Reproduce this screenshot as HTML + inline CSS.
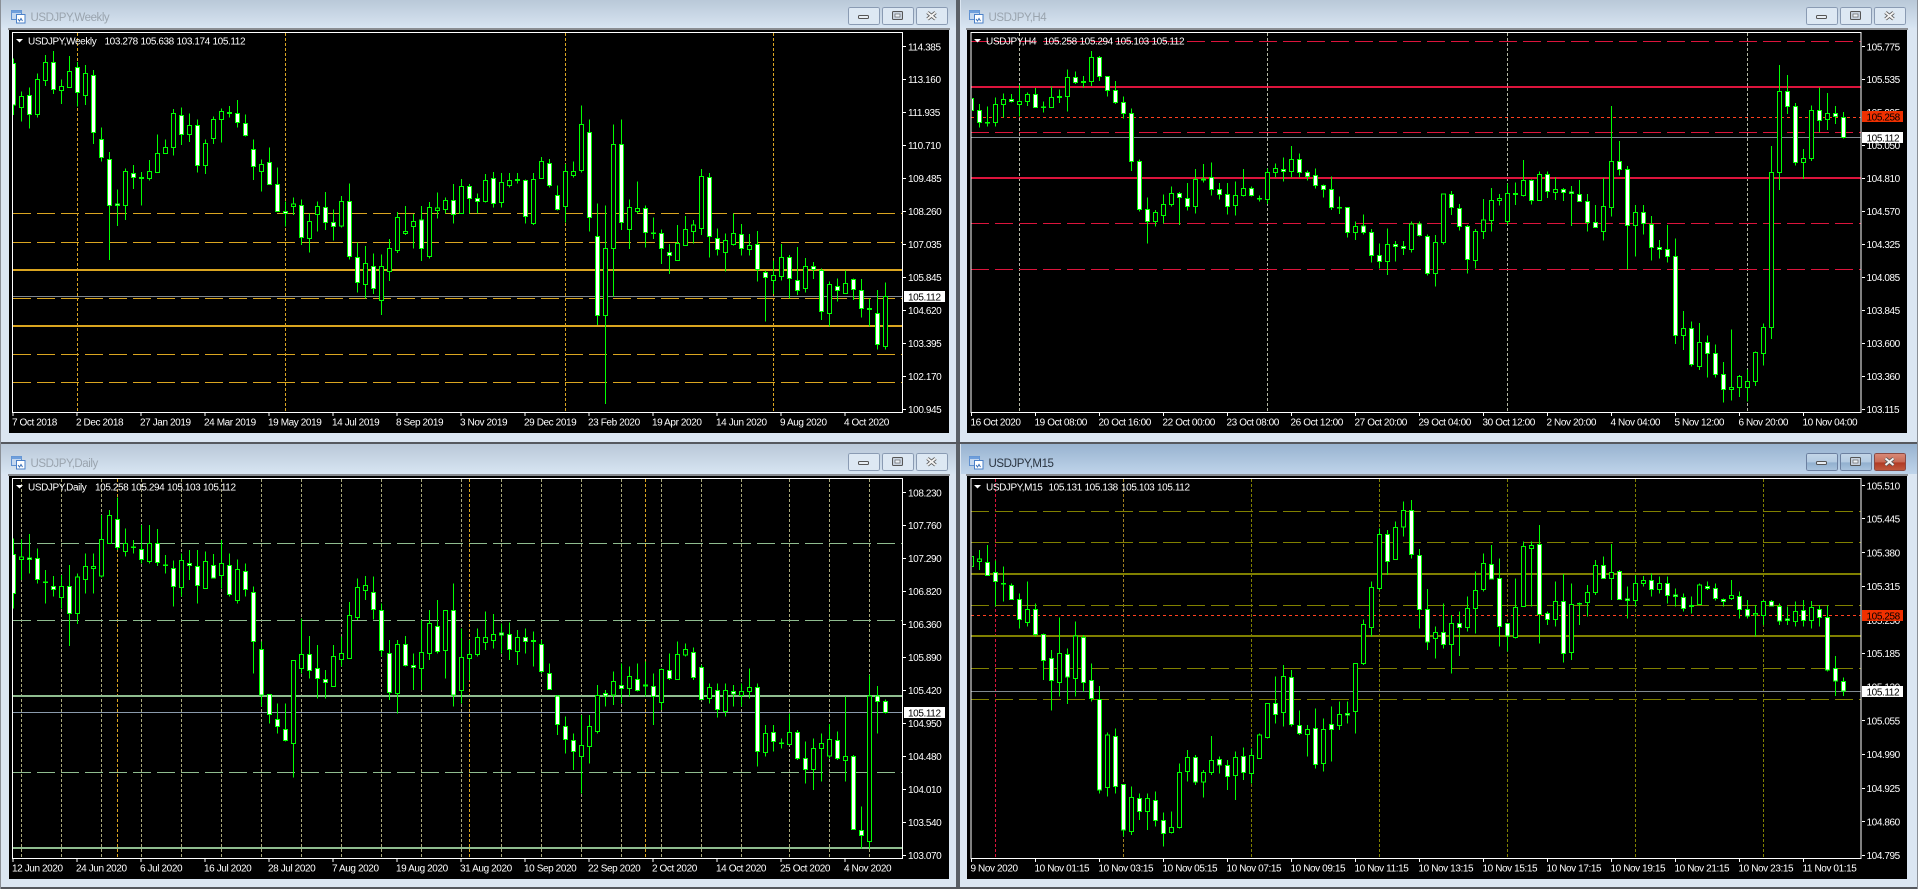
<!DOCTYPE html>
<html><head><meta charset="utf-8"><title>USDJPY charts</title>
<style>
html,body{margin:0;padding:0;background:#dbe6f2;width:1918px;height:889px;overflow:hidden}
svg{display:block}
text{font-family:"Liberation Sans",sans-serif;font-size:10px;letter-spacing:-.4px;fill:#fff}
text.k{fill:#000}
text.t{font-size:11.5px;letter-spacing:-.45px;fill:#9aa4ae}
text.a{font-size:11.5px;letter-spacing:-.45px;fill:#2a3440}
.c path{vector-effect:non-scaling-stroke;stroke:#00ff00;stroke-width:1}
.w{fill:none}.h{fill:#000}.d{fill:#fff}
.g{fill:none;stroke-width:1}
</style></head><body>
<svg width="1918" height="889" viewBox="0 0 1918 889" xmlns="http://www.w3.org/2000/svg" shape-rendering="crispEdges">
<defs>
<linearGradient id="ti" x1="0" y1="0" x2="0" y2="1"><stop offset="0" stop-color="#b9c8d8"/><stop offset="1" stop-color="#d8e5f2"/></linearGradient>
<linearGradient id="ta" x1="0" y1="0" x2="0" y2="1"><stop offset="0" stop-color="#98b3d0"/><stop offset="1" stop-color="#bfd4ea"/></linearGradient>
<linearGradient id="br" x1="0" y1="0" x2="0" y2="1"><stop offset="0" stop-color="#d98a78"/><stop offset=".5" stop-color="#c76a56"/><stop offset=".55" stop-color="#b03a24"/><stop offset="1" stop-color="#c05a40"/></linearGradient>
<linearGradient id="bb" x1="0" y1="0" x2="0" y2="1"><stop offset="0" stop-color="#c4d6e8"/><stop offset=".5" stop-color="#b4cbe2"/><stop offset=".55" stop-color="#92b0cf"/><stop offset="1" stop-color="#aac4de"/></linearGradient>
<clipPath id="c1"><rect x="13" y="33" width="889" height="379"/></clipPath>
<clipPath id="c2"><rect x="972" y="33" width="889" height="379"/></clipPath>
<clipPath id="c3"><rect x="13" y="479" width="889" height="379"/></clipPath>
<clipPath id="c4"><rect x="972" y="479" width="889" height="379"/></clipPath>
<g id="ic" shape-rendering="auto">
<rect x="11.5" y="10.5" width="10" height="9" fill="#c4d8f0" stroke="#5f90d0"/>
<rect x="11.5" y="10.5" width="10" height="2.5" fill="#6f9fdc"/>
<rect x="16.5" y="14.5" width="8.5" height="8.5" fill="#fff" stroke="#4a80c8"/>
<path d="M18 19l1.5 2 1.5-2.5 1.500 2.500" fill="none" stroke="#3a70b8"/>
</g>
<g id="gl" shape-rendering="auto">
<rect x="858.500" y="15.500" width="10" height="3" rx="1" fill="#e8eef4" stroke="#555"/>
<rect x="892.500" y="11.500" width="10" height="8" rx="1" fill="#c8d2de" stroke="#555"/>
<rect x="895" y="14" width="5" height="3" fill="#eef3f8" stroke="#555" stroke-width=".6"/>
<path d="M927.500 12.500l8 6.500m0-6.500l-8 6.500" stroke="#555" stroke-width="3.600" fill="none"/>
<path d="M927.500 12.500l8 6.500m0-6.500l-8 6.500" stroke="#f2f2f2" stroke-width="2" fill="none"/>
</g>
<g id="bi">
<rect x="848.500" y="7.500" width="31" height="17" rx="2" fill="#dde8f3" stroke="#8a9bb3"/>
<rect x="882.500" y="7.500" width="31" height="17" rx="2" fill="#dde8f3" stroke="#8a9bb3"/>
<rect x="916.500" y="7.500" width="31" height="17" rx="2" fill="#dde8f3" stroke="#8a9bb3"/>
<use href="#gl"/>
</g>
<g id="fw">
<path d="M13 413v3m64-3v3m64-3v3m64-3v3m64-3v3m64-3v3m64-3v3m64-3v3m64-3v3m64-3v3m64-3v3m64-3v3m64-3v3m64-3v3" stroke="#fff" fill="none"/>
<path d="M12.500 32.500H902.500V412.500H12.500Z" stroke="#fff" fill="none"/>
</g>
</defs>

<!-- window frames -->
<rect x="0" y="0" width="1918" height="889" fill="#dbe6f2"/>
<rect x="0" y="0" width="957" height="28" fill="url(#ti)"/>
<rect x="961" y="0" width="957" height="28" fill="url(#ti)"/>
<rect x="0" y="444" width="957" height="30" fill="url(#ti)"/>
<rect x="961" y="444" width="957" height="30" fill="url(#ta)"/>
<rect x="956" y="0" width="4" height="889" fill="#5a5f66"/>
<rect x="0" y="442" width="1918" height="2" fill="#55585e"/>
<rect x="0" y="887" width="1918" height="2" fill="#55585e"/>
<rect x="0" y="0" width="1" height="889" fill="#8a8f96"/>
<rect x="1917" y="0" width="1" height="889" fill="#8a8f96"/>
<rect x="8" y="28" width="942" height="2" fill="#8b8e93"/>
<rect x="966" y="28" width="942" height="2" fill="#8b8e93"/>
<rect x="8" y="474" width="942" height="2" fill="#8b8e93"/>
<rect x="966" y="474" width="942" height="2" fill="#8b8e93"/>
<rect x="9" y="30" width="940" height="403" fill="#000"/>
<rect x="967" y="30" width="940" height="403" fill="#000"/>
<rect x="9" y="476" width="940" height="403" fill="#000"/>
<rect x="967" y="476" width="940" height="403" fill="#000"/>

<!-- title bars -->
<use href="#ic"/>
<use href="#ic" x="958"/>
<use href="#ic" y="446"/>
<use href="#ic" x="958" y="446"/>
<text class="t" x="30.500" y="21">USDJPY,Weekly</text>
<text class="t" x="988.500" y="21">USDJPY,H4</text>
<text class="t" x="30.500" y="467">USDJPY,Daily</text>
<text class="a" x="988.500" y="467">USDJPY,M15</text>
<use href="#bi"/>
<use href="#bi" x="958"/>
<use href="#bi" y="446"/>
<rect x="1806.500" y="453.500" width="31" height="17" rx="2" fill="url(#bb)" stroke="#6c80a0"/>
<rect x="1840.500" y="453.500" width="31" height="17" rx="2" fill="url(#bb)" stroke="#6c80a0"/>
<rect x="1874.500" y="453.500" width="31" height="17" rx="2" fill="url(#br)" stroke="#8a4a44"/>
<use href="#gl" x="958" y="446"/>

<!-- WEEKLY -->
<g class="g">
<path d="M77.500 33V412M285.500 33V412M565.500 33V412M773.500 33V412" stroke="#daa520" stroke-dasharray="3 2"/>
<path d="M13 213.500H902M13 242.500H902M13 298.500H902M13 354.500H902M13 382.500H902" stroke="#daa520" stroke-dasharray="18 6"/>
<path d="M13 270H902M13 326H902" stroke="#daa520" stroke-width="2"/>
<path d="M13 296.500H902" stroke="#808890"/>
</g>
<g clip-path="url(#c1)"><g class="c" transform="scale(1 .33333)">
<path class="w" d="M13.500 175V345M21.500 275V365M29.500 262V385M37.500 220V352M45.500 165V258M53.500 153V282M61.500 238V312M69.500 168V262M77.500 186V320M85.500 195V315M93.500 210V432M101.500 382V485M109.500 456V780M117.500 568V678M125.500 505V660M133.500 495V567M141.500 516V617M149.500 480V542M157.500 403V518M165.500 418V460M173.500 327V467M181.500 322V435M189.500 340V426M197.500 358V518M205.500 418V522M213.500 350V432M221.500 325V428M229.500 318V353M237.500 300V383M245.500 343V410M253.500 418V540M261.500 478V575M269.500 442V553M277.500 502V635M285.500 604V680M293.500 592V645M301.500 598V735M309.500 640V758M317.500 604V695M325.500 576V690M333.500 628V722M341.500 588V683M349.500 550V778M357.500 728V878M365.500 738V895M373.500 760V882M381.500 763V945M389.500 717V843M397.500 636V759M405.500 618V705M413.500 642V745M421.500 618V783M429.500 606V775M437.500 578V655M445.500 592V640M453.500 552V670M461.500 537V641M469.500 552V641M477.500 580V640M485.500 522V608M493.500 516V623M501.500 519V623M509.500 519V563M517.500 519V551M525.500 538V670M533.500 519V675M541.500 471V535M549.500 477V563M557.500 556V632M565.500 492V667M573.500 484V532M581.500 316V518M589.500 358V695M597.500 610V975M605.500 616V1212M613.500 373V890M621.500 358V690M629.500 598V747M637.500 544V640M645.500 616V743M653.500 652V717M661.500 688V792M669.500 732V822M677.500 675V730M685.500 648V737M693.500 660V731M701.500 507V705M709.500 519V773M717.500 685V767M725.500 700V815M733.500 640V737M741.500 672V767M749.500 702V767M757.500 693V845M765.500 812V965M773.500 781V882M781.500 732V842M789.500 765V895M797.500 741V885M805.500 774V878M813.500 786V837M821.500 805V960M829.500 844V980M837.500 835V905M845.500 812V880M853.500 835V900M861.500 837V953M869.500 895V980M877.500 870V1049M885.500 847V1049"/>
<path class="h" d="M19.500 290h4V322h-4zM35.500 238h4V344h-4zM43.500 187h4V241h-4zM59.500 259h4V271h-4zM67.500 214h4V262h-4zM83.500 220h4V286h-4zM123.500 514h4V616h-4zM147.500 514h4V536h-4zM155.500 460h4V518h-4zM163.500 442h4V460h-4zM171.500 340h4V442h-4zM187.500 376h4V403h-4zM203.500 430h4V496h-4zM211.500 358h4V416h-4zM219.500 334h4V358h-4zM259.500 493h4V515h-4zM291.500 612h4V620h-4zM307.500 664h4V715h-4zM315.500 620h4V644h-4zM339.500 604h4V678h-4zM363.500 790h4V853h-4zM379.500 799h4V901h-4zM387.500 745h4V815h-4zM395.500 652h4V752h-4zM403.500 694h4V701h-4zM411.500 664h4V679h-4zM427.500 622h4V770h-4zM435.500 624h4V632h-4zM443.500 601h4V628h-4zM459.500 559h4V641h-4zM483.500 541h4V605h-4zM499.500 547h4V607h-4zM507.500 541h4V556h-4zM531.500 538h4V670h-4zM539.500 484h4V535h-4zM563.500 514h4V620h-4zM571.500 514h4V526h-4zM579.500 373h4V512h-4zM603.500 745h4V946h-4zM611.500 433h4V745h-4zM627.500 622h4V688h-4zM635.500 625h4V635h-4zM675.500 730h4V781h-4zM683.500 688h4V737h-4zM691.500 675h4V694h-4zM699.500 529h4V685h-4zM723.500 721h4V757h-4zM731.500 700h4V733h-4zM747.500 736h4V748h-4zM771.500 826h4V841h-4zM779.500 772h4V829h-4zM803.500 799h4V865h-4zM827.500 853h4V940h-4zM843.500 850h4V880h-4zM883.500 889h4V1039h-4z"/>
<path class="d" d="M11.500 190h4V315h-4zM27.500 287h4V343h-4zM51.500 187h4V268h-4zM75.500 202h4V277h-4zM91.500 226h4V397h-4zM99.500 418h4V472h-4zM107.500 478h4V616h-4zM115.500 612h4V616h-4zM131.500 520h4V532h-4zM139.500 532h4V535h-4zM179.500 346h4V403h-4zM195.500 376h4V496h-4zM227.500 338h4V340h-4zM235.500 340h4V367h-4zM243.500 370h4V406h-4zM251.500 448h4V499h-4zM267.500 487h4V553h-4zM275.500 553h4V635h-4zM283.500 634h4V640h-4zM299.500 616h4V713h-4zM323.500 622h4V668h-4zM331.500 667h4V679h-4zM347.500 604h4V770h-4zM355.500 772h4V848h-4zM371.500 799h4V865h-4zM419.500 660h4V746h-4zM451.500 601h4V643h-4zM467.500 559h4V595h-4zM475.500 596h4V604h-4zM491.500 535h4V610h-4zM515.500 538h4V541h-4zM523.500 541h4V649h-4zM547.500 490h4V556h-4zM555.500 586h4V628h-4zM587.500 397h4V652h-4zM595.500 709h4V946h-4zM619.500 433h4V667h-4zM643.500 625h4V697h-4zM651.500 699h4V701h-4zM659.500 700h4V745h-4zM667.500 757h4V766h-4zM707.500 532h4V710h-4zM715.500 715h4V748h-4zM739.500 703h4V745h-4zM755.500 733h4V808h-4zM763.500 818h4V832h-4zM787.500 772h4V835h-4zM795.500 841h4V871h-4zM811.500 799h4V808h-4zM819.500 812h4V934h-4zM835.500 859h4V871h-4zM851.500 838h4V868h-4zM859.500 871h4V925h-4zM867.500 925h4V928h-4zM875.500 940h4V1033h-4z"/>
</g></g>
<use href="#fw"/>
<path d="M903 46.500h3m-3 33h3m-3 33h3m-3 33h3m-3 33h3m-3 33h3m-3 33h3m-3 33h3m-3 33h3m-3 33h3m-3 33h3m-3 33h3" stroke="#fff" fill="none"/>
<path d="M16 39h7l-3.500 3.500z" fill="#fff" shape-rendering="auto"/>
<text x="28" y="44.500">USDJPY,Weekly</text><text x="104.500" y="44.500">103.278</text><text x="140.500" y="44.500">105.638</text><text x="176.500" y="44.500">103.174</text><text x="212.500" y="44.500">105.112</text>
<text x="908" y="50.500">114.385</text><text x="908" y="83">113.160</text><text x="908" y="116">111.935</text><text x="908" y="149">110.710</text><text x="908" y="182">109.485</text><text x="908" y="215">108.260</text><text x="908" y="248">107.035</text><text x="908" y="281">105.845</text><text x="908" y="314">104.620</text><text x="908" y="347">103.395</text><text x="908" y="380">102.170</text><text x="908" y="413">100.945</text>
<rect x="904" y="291" width="41" height="11" fill="#fff"/><text class="k" x="908" y="300.500">105.112</text>
<text x="12" y="425.500">7 Oct 2018</text><text x="76" y="425.500">2 Dec 2018</text><text x="140" y="425.500">27 Jan 2019</text><text x="204" y="425.500">24 Mar 2019</text><text x="268" y="425.500">19 May 2019</text><text x="332" y="425.500">14 Jul 2019</text><text x="396" y="425.500">8 Sep 2019</text><text x="460" y="425.500">3 Nov 2019</text><text x="524" y="425.500">29 Dec 2019</text><text x="588" y="425.500">23 Feb 2020</text><text x="652" y="425.500">19 Apr 2020</text><text x="716" y="425.500">14 Jun 2020</text><text x="780" y="425.500">9 Aug 2020</text><text x="844" y="425.500">4 Oct 2020</text>

<!-- H4 -->
<g class="g">
<path d="M1019.500 33V412M1267.500 33V412M1507.500 33V412M1747.500 33V412" stroke="#b4b8a4" stroke-dasharray="3 2"/>
<path d="M971 41.500H1861M971 132.500H1861M971 223.500H1861M971 269.500H1861" stroke="#dc143c" stroke-dasharray="18 6"/>
<path d="M971 87H1861M971 178H1861" stroke="#dc143c" stroke-width="2"/>
<path d="M971 117.500H1861" stroke="#ff4020" stroke-dasharray="3 3"/>
<path d="M971 137.500H1861" stroke="#808890"/>
</g>
<g clip-path="url(#c2)"><g class="c" transform="scale(1 .33333)">
<path class="w" d="M971.500 270V365M979.500 312V383M987.500 320V380M995.500 292V380M1003.500 280V352M1011.500 282V308M1019.500 255V350M1027.500 277V318M1035.500 264V323M1043.500 305V338M1051.500 259V323M1059.500 268V309M1067.500 208V335M1075.500 214V252M1083.500 228V263M1091.500 153V258M1099.500 168V243M1107.500 229V290M1115.500 243V312M1123.500 289V356M1131.500 325V513M1139.500 478V634M1147.500 592V731M1155.500 630V680M1163.500 583V670M1171.500 560V620M1179.500 576V675M1187.500 549V632M1195.500 507V641M1203.500 492V548M1211.500 487V587M1219.500 549V599M1227.500 549V644M1235.500 544V647M1243.500 507V590M1251.500 559V590M1259.500 586V604M1267.500 505V612M1275.500 490V533M1283.500 472V545M1291.500 438V533M1299.500 460V533M1307.500 511V542M1315.500 505V566M1323.500 553V593M1331.500 529V630M1339.500 589V642M1347.500 622V713M1355.500 664V720M1363.500 643V703M1371.500 687V788M1379.500 730V805M1387.500 685V825M1395.500 723V785M1403.500 723V765M1411.500 664V757M1419.500 664V710M1427.500 703V827M1435.500 705V860M1443.500 580V733M1451.500 573V645M1459.500 612V691M1467.500 675V821M1475.500 687V805M1483.500 597V717M1491.500 564V695M1499.500 582V617M1507.500 550V675M1515.500 548V615M1523.500 480V590M1531.500 539V614M1539.500 515V602M1547.500 514V594M1555.500 532V600M1563.500 564V603M1571.500 558V678M1579.500 540V606M1587.500 582V695M1595.500 615V684M1603.500 534V722M1611.500 318V650M1619.500 423V527M1627.500 498V808M1635.500 615V770M1643.500 615V703M1651.500 648V782M1659.500 720V776M1667.500 675V788M1675.500 715V1032M1683.500 933V1050M1691.500 964V1100M1699.500 969V1110M1707.500 1006V1133M1715.500 1033V1133M1723.500 1086V1208M1731.500 988V1202M1739.500 1125V1191M1747.500 1108V1205M1755.500 1054V1158M1763.500 970V1097M1771.500 438V1017M1779.500 195V570M1787.500 225V342M1795.500 309V497M1803.500 447V537M1811.500 316V483M1819.500 262V398M1827.500 279V390M1835.500 318V372M1843.500 336V416"/>
<path class="h" d="M993.500 313h4V368h-4zM1001.500 298h4V314h-4zM1017.500 304h4V314h-4zM1025.500 283h4V304h-4zM1049.500 292h4V323h-4zM1065.500 232h4V290h-4zM1089.500 172h4V245h-4zM1153.500 637h4V665h-4zM1161.500 613h4V646h-4zM1169.500 580h4V613h-4zM1193.500 538h4V620h-4zM1233.500 586h4V617h-4zM1241.500 565h4V587h-4zM1265.500 517h4V598h-4zM1273.500 505h4V518h-4zM1289.500 478h4V515h-4zM1353.500 679h4V697h-4zM1385.500 733h4V784h-4zM1409.500 672h4V748h-4zM1433.500 727h4V820h-4zM1441.500 582h4V727h-4zM1473.500 694h4V781h-4zM1481.500 660h4V694h-4zM1489.500 601h4V662h-4zM1497.500 595h4V601h-4zM1505.500 580h4V665h-4zM1521.500 541h4V587h-4zM1537.500 523h4V602h-4zM1553.500 568h4V578h-4zM1601.500 619h4V694h-4zM1609.500 484h4V622h-4zM1633.500 637h4V676h-4zM1681.500 985h4V1006h-4zM1697.500 1027h4V1100h-4zM1729.500 1162h4V1168h-4zM1737.500 1129h4V1162h-4zM1745.500 1145h4V1162h-4zM1753.500 1057h4V1145h-4zM1761.500 982h4V1060h-4zM1769.500 517h4V982h-4zM1777.500 274h4V518h-4zM1801.500 475h4V488h-4zM1809.500 331h4V476h-4zM1825.500 340h4V358h-4z"/>
<path class="d" d="M969.500 295h4V332h-4zM977.500 331h4V368h-4zM985.500 367h4V369h-4zM1009.500 298h4V305h-4zM1033.500 283h4V322h-4zM1041.500 321h4V323h-4zM1057.500 289h4V292h-4zM1073.500 232h4V248h-4zM1081.500 244h4V247h-4zM1097.500 172h4V229h-4zM1105.500 229h4V271h-4zM1113.500 271h4V308h-4zM1121.500 307h4V340h-4zM1129.500 340h4V484h-4zM1137.500 484h4V628h-4zM1145.500 628h4V664h-4zM1177.500 580h4V592h-4zM1185.500 596h4V620h-4zM1201.500 537h4V540h-4zM1209.500 532h4V568h-4zM1217.500 568h4V583h-4zM1225.500 583h4V619h-4zM1249.500 565h4V587h-4zM1257.500 595h4V597h-4zM1281.500 508h4V515h-4zM1297.500 478h4V518h-4zM1305.500 517h4V529h-4zM1313.500 526h4V556h-4zM1321.500 556h4V568h-4zM1329.500 568h4V622h-4zM1337.500 622h4V624h-4zM1345.500 622h4V697h-4zM1361.500 678h4V697h-4zM1369.500 697h4V766h-4zM1377.500 766h4V784h-4zM1393.500 733h4V739h-4zM1401.500 739h4V745h-4zM1417.500 672h4V706h-4zM1425.500 709h4V820h-4zM1449.500 583h4V622h-4zM1457.500 625h4V679h-4zM1465.500 679h4V778h-4zM1513.500 580h4V583h-4zM1529.500 541h4V602h-4zM1545.500 523h4V575h-4zM1561.500 568h4V578h-4zM1569.500 576h4V581h-4zM1577.500 583h4V605h-4zM1585.500 604h4V667h-4zM1593.500 667h4V683h-4zM1617.500 484h4V508h-4zM1625.500 508h4V676h-4zM1641.500 637h4V671h-4zM1649.500 673h4V742h-4zM1657.500 742h4V748h-4zM1665.500 748h4V769h-4zM1673.500 769h4V1006h-4zM1689.500 985h4V1093h-4zM1705.500 1027h4V1060h-4zM1713.500 1060h4V1123h-4zM1721.500 1123h4V1168h-4zM1785.500 274h4V319h-4zM1793.500 319h4V488h-4zM1817.500 331h4V362h-4zM1833.500 340h4V350h-4zM1841.500 352h4V412h-4z"/>
</g></g>
<use href="#fw" x="958.500"/>
<path d="M1862 46.500h3m-3 33h3m-3 33h3m-3 33h3m-3 33h3m-3 33h3m-3 33h3m-3 33h3m-3 33h3m-3 33h3m-3 33h3m-3 33h3" stroke="#fff" fill="none"/>
<path d="M974 39h7l-3.500 3.500z" fill="#fff" shape-rendering="auto"/>
<text x="986" y="44.500">USDJPY,H4</text><text x="1043.500" y="44.500">105.258</text><text x="1079.500" y="44.500">105.294</text><text x="1115.500" y="44.500">105.103</text><text x="1151.500" y="44.500">105.112</text>
<text x="1866.500" y="50.500">105.775</text><text x="1866.500" y="83">105.535</text><text x="1866.500" y="116">105.295</text><text x="1866.500" y="149">105.050</text><text x="1866.500" y="182">104.810</text><text x="1866.500" y="215">104.570</text><text x="1866.500" y="248">104.325</text><text x="1866.500" y="281">104.085</text><text x="1866.500" y="314">103.845</text><text x="1866.500" y="347">103.600</text><text x="1866.500" y="380">103.360</text><text x="1866.500" y="413">103.115</text>
<rect x="1862" y="111" width="41" height="11" fill="#f03000"/><text class="k" x="1866.500" y="120.500">105.258</text>
<rect x="1862" y="132" width="41" height="11" fill="#fff"/><text class="k" x="1866.500" y="141.500">105.112</text>
<text x="970.500" y="425.500">16 Oct 2020</text><text x="1034.500" y="425.500">19 Oct 08:00</text><text x="1098.500" y="425.500">20 Oct 16:00</text><text x="1162.500" y="425.500">22 Oct 00:00</text><text x="1226.500" y="425.500">23 Oct 08:00</text><text x="1290.500" y="425.500">26 Oct 12:00</text><text x="1354.500" y="425.500">27 Oct 20:00</text><text x="1418.500" y="425.500">29 Oct 04:00</text><text x="1482.500" y="425.500">30 Oct 12:00</text><text x="1546.500" y="425.500">2 Nov 20:00</text><text x="1610.500" y="425.500">4 Nov 04:00</text><text x="1674.500" y="425.500">5 Nov 12:00</text><text x="1738.500" y="425.500">6 Nov 20:00</text><text x="1802.500" y="425.500">10 Nov 04:00</text>

<!-- DAILY -->
<g class="g">
<path d="M21.500 479V858M61.500 479V858M101.500 479V858M141.500 479V858M181.500 479V858M221.500 479V858M261.500 479V858M301.500 479V858M341.500 479V858M381.500 479V858M421.500 479V858M461.500 479V858M501.500 479V858M541.500 479V858M581.500 479V858M621.500 479V858M661.500 479V858M701.500 479V858M741.500 479V858M789.500 479V858M829.500 479V858M869.500 479V858" stroke="#a9a97a" stroke-dasharray="3 2"/>
<path d="M117.500 479V858M469.500 479V858M645.500 479V858" stroke="#daa520" stroke-dasharray="3 2"/>
<path d="M13 543.500H902M13 620.500H902M13 772.500H902" stroke="#8fbc8f" stroke-dasharray="18 6"/>
<path d="M13 696H902M13 848H902" stroke="#8fbc8f" stroke-width="2"/>
<path d="M13 712.500H902" stroke="#8a9aac"/>
</g>
<g clip-path="url(#c3)"><g transform="translate(0 440)"><g class="c" transform="scale(1 .33333)">
<path class="w" d="M13.500 295V505M21.500 298V420M29.500 282V400M37.500 325V430M45.500 390V490M53.500 408V470M61.500 405V505M69.500 375V618M77.500 400V552M85.500 340V460M93.500 340V460M101.500 225V412M109.500 210V310M117.500 172V330M125.500 265V350M133.500 300V340M141.500 255V370M149.500 255V370M157.500 267V378M165.500 345V400M173.500 362V500M181.500 340V470M189.500 330V420M197.500 330V490M205.500 335V445M213.500 342V415M221.500 300V445M229.500 340V470M237.500 358V490M245.500 370V470M253.500 440V700M261.500 604V800M269.500 762V850M277.500 790V880M285.500 790V905M293.500 660V1013M301.500 535V700M309.500 588V715M317.500 615V775M325.500 690V775M333.500 615V740M341.500 590V680M349.500 486V655M357.500 415V540M365.500 408V480M373.500 410V538M381.500 490V650M389.500 600V780M397.500 600V820M405.500 588V680M413.500 640V750M421.500 540V750M429.500 510V660M437.500 480V640M445.500 510V715M453.500 430V800M461.500 565V790M469.500 600V720M477.500 565V650M485.500 515V630M493.500 522V625M501.500 550V640M509.500 548V660M517.500 570V675M525.500 565V640M533.500 575V680M541.500 600V700M549.500 670V750M557.500 765V885M565.500 830V940M573.500 880V990M581.500 825V1060M589.500 825V970M597.500 735V880M605.500 750V800M613.500 695V795M621.500 670V790M629.500 680V770M637.500 670V755M645.500 665V770M653.500 700V855M661.500 685V810M669.500 640V720M677.500 605V720M685.500 610V650M693.500 622V720M701.500 675V780M709.500 730V790M717.500 730V832M725.500 730V830M733.500 735V800M741.500 730V800M749.500 685V775M757.500 730V980M765.500 855V950M773.500 855V935M781.500 895V925M789.500 820V915M797.500 870V960M805.500 905V1030M813.500 895V1050M821.500 880V1025M829.500 852V955M837.500 875V960M845.500 770V1025M853.500 945V1170M861.500 1100V1225M869.500 705V1225M877.500 738V880M885.500 778V820"/>
<path class="h" d="M19.500 351h4V358h-4zM59.500 439h4V472h-4zM75.500 411h4V520h-4zM83.500 379h4V418h-4zM91.500 379h4V385h-4zM99.500 298h4V408h-4zM107.500 226h4V310h-4zM123.500 311h4V335h-4zM147.500 310h4V365h-4zM179.500 361h4V442h-4zM203.500 364h4V445h-4zM219.500 370h4V406h-4zM235.500 388h4V481h-4zM291.500 661h4V910h-4zM299.500 643h4V685h-4zM331.500 649h4V739h-4zM339.500 640h4V658h-4zM347.500 526h4V655h-4zM355.500 442h4V532h-4zM363.500 436h4V451h-4zM395.500 613h4V760h-4zM419.500 637h4V685h-4zM427.500 550h4V640h-4zM443.500 511h4V632h-4zM459.500 652h4V752h-4zM467.500 643h4V655h-4zM475.500 592h4V643h-4zM483.500 592h4V607h-4zM491.500 583h4V601h-4zM515.500 592h4V634h-4zM579.500 916h4V949h-4zM587.500 859h4V919h-4zM595.500 766h4V874h-4zM611.500 724h4V765h-4zM627.500 709h4V745h-4zM659.500 688h4V788h-4zM675.500 643h4V718h-4zM683.500 628h4V645h-4zM707.500 742h4V775h-4zM723.500 751h4V815h-4zM739.500 754h4V767h-4zM747.500 742h4V754h-4zM763.500 880h4V937h-4zM787.500 877h4V913h-4zM811.500 925h4V988h-4zM819.500 910h4V925h-4zM827.500 898h4V948h-4zM843.500 949h4V961h-4zM867.500 768h4V1204h-4z"/>
<path class="d" d="M11.500 343h4V460h-4zM27.500 354h4V358h-4zM35.500 355h4V418h-4zM43.500 426h4V428h-4zM51.500 439h4V448h-4zM67.500 439h4V520h-4zM115.500 238h4V322h-4zM131.500 321h4V323h-4zM139.500 328h4V358h-4zM155.500 311h4V368h-4zM163.500 375h4V377h-4zM171.500 385h4V439h-4zM187.500 370h4V376h-4zM195.500 379h4V436h-4zM211.500 376h4V414h-4zM227.500 376h4V463h-4zM243.500 394h4V449h-4zM251.500 457h4V604h-4zM259.500 628h4V765h-4zM267.500 763h4V823h-4zM275.500 838h4V859h-4zM283.500 868h4V902h-4zM307.500 643h4V691h-4zM315.500 685h4V715h-4zM323.500 718h4V728h-4zM371.500 457h4V508h-4zM379.500 511h4V632h-4zM387.500 640h4V758h-4zM403.500 613h4V676h-4zM411.500 676h4V682h-4zM435.500 559h4V635h-4zM451.500 511h4V765h-4zM499.500 579h4V585h-4zM507.500 583h4V628h-4zM523.500 592h4V604h-4zM531.500 601h4V605h-4zM539.500 613h4V694h-4zM547.500 700h4V748h-4zM555.500 768h4V853h-4zM563.500 859h4V898h-4zM571.500 901h4V934h-4zM603.500 760h4V768h-4zM619.500 736h4V745h-4zM635.500 718h4V751h-4zM643.500 735h4V738h-4zM651.500 739h4V769h-4zM667.500 691h4V715h-4zM691.500 637h4V712h-4zM699.500 682h4V778h-4zM715.500 751h4V808h-4zM731.500 754h4V762h-4zM755.500 743h4V934h-4zM771.500 877h4V904h-4zM779.500 909h4V911h-4zM795.500 877h4V955h-4zM803.500 955h4V988h-4zM835.500 901h4V955h-4zM851.500 949h4V1168h-4zM859.500 1171h4V1186h-4zM875.500 768h4V785h-4zM883.500 785h4V817h-4z"/>
</g></g></g>
<use href="#fw" y="446"/>
<path d="M903 492.500h3m-3 33h3m-3 33h3m-3 33h3m-3 33h3m-3 33h3m-3 33h3m-3 33h3m-3 33h3m-3 33h3m-3 33h3m-3 33h3" stroke="#fff" fill="none"/>
<path d="M16 485h7l-3.500 3.500z" fill="#fff" shape-rendering="auto"/>
<text x="28" y="490.500">USDJPY,Daily</text><text x="95" y="490.500">105.258</text><text x="131" y="490.500">105.294</text><text x="167" y="490.500">105.103</text><text x="203" y="490.500">105.112</text>
<text x="908" y="496.500">108.230</text><text x="908" y="529">107.760</text><text x="908" y="562">107.290</text><text x="908" y="595">106.820</text><text x="908" y="628">106.360</text><text x="908" y="661">105.890</text><text x="908" y="694">105.420</text><text x="908" y="727">104.950</text><text x="908" y="760">104.480</text><text x="908" y="793">104.010</text><text x="908" y="826">103.540</text><text x="908" y="859">103.070</text>
<rect x="904" y="707" width="41" height="11" fill="#fff"/><text class="k" x="908" y="716.500">105.112</text>
<text x="12" y="871.500">12 Jun 2020</text><text x="76" y="871.500">24 Jun 2020</text><text x="140" y="871.500">6 Jul 2020</text><text x="204" y="871.500">16 Jul 2020</text><text x="268" y="871.500">28 Jul 2020</text><text x="332" y="871.500">7 Aug 2020</text><text x="396" y="871.500">19 Aug 2020</text><text x="460" y="871.500">31 Aug 2020</text><text x="524" y="871.500">10 Sep 2020</text><text x="588" y="871.500">22 Sep 2020</text><text x="652" y="871.500">2 Oct 2020</text><text x="716" y="871.500">14 Oct 2020</text><text x="780" y="871.500">25 Oct 2020</text><text x="844" y="871.500">4 Nov 2020</text>

<!-- M15 -->
<g class="g">
<path d="M1251.500 479V858M1379.500 479V858M1507.500 479V858M1635.500 479V858M1763.500 479V858" stroke="#808000" stroke-dasharray="3 2"/>
<path d="M1123.500 479V858" stroke="#a08020" stroke-dasharray="3 2"/>
<path d="M995.500 479V858" stroke="#dc143c" stroke-dasharray="3 2"/>
<path d="M971 511.500H1861M971 542.500H1861M971 605.500H1861M971 668.500H1861M971 699.500H1861" stroke="#808000" stroke-dasharray="18 6"/>
<path d="M971 574H1861M971 636H1861" stroke="#808000" stroke-width="2"/>
<path d="M971 615.500H1861" stroke="#ff4020" stroke-dasharray="3 3"/>
<path d="M971 691.500H1861" stroke="#808890"/>
</g>
<g clip-path="url(#c4)"><g transform="translate(0 440)"><g class="c" transform="scale(1 .33333)">
<path class="w" d="M971.500 340V400M979.500 330V390M987.500 315V405M995.500 362V500M1003.500 380V485M1011.500 430V480M1019.500 460V565M1027.500 425V560M1035.500 490V590M1043.500 580V720M1051.500 630V812M1059.500 532V770M1067.500 625V792M1075.500 545V770M1083.500 585V755M1091.500 670V785M1099.500 738V1060M1107.500 878V1070M1115.500 865V1060M1123.500 1033V1190M1131.500 1040V1185M1139.500 1060V1140M1147.500 1060V1170M1155.500 1055V1160M1163.500 1117V1220M1171.500 1115V1180M1179.500 970V1165M1187.500 930V1025M1195.500 945V1035M1203.500 990V1072M1211.500 888V1005M1219.500 950V1000M1227.500 960V1050M1235.500 935V1080M1243.500 922V1020M1251.500 925V1030M1259.500 880V955M1267.500 790V895M1275.500 710V850M1283.500 675V860M1291.500 690V860M1299.500 812V885M1307.500 855V950M1315.500 805V985M1323.500 835V995M1331.500 800V965M1339.500 785V870M1347.500 785V850M1355.500 670V880M1363.500 538V675M1371.500 425V590M1379.500 265V450M1387.500 270V405M1395.500 245V360M1403.500 185V290M1411.500 180V355M1419.500 327V565M1427.500 447V630M1435.500 560V655M1443.500 490V625M1451.500 525V700M1459.500 515V648M1467.500 470V575M1475.500 395V580M1483.500 340V455M1491.500 315V418M1499.500 355V620M1507.500 550V635M1515.500 415V595M1523.500 305V500M1531.500 305V500M1539.500 255V610M1547.500 515V555M1555.500 425V560M1563.500 402V668M1571.500 430V660M1579.500 487V555M1587.500 435V530M1595.500 360V465M1603.500 350V415M1611.500 312V480M1619.500 390V480M1627.500 440V535M1635.500 405V500M1643.500 408V440M1651.500 400V470M1659.500 410V460M1667.500 410V490M1675.500 445V500M1683.500 460V515M1691.500 470V520M1699.500 430V495M1707.500 425V450M1715.500 430V482M1723.500 475V500M1731.500 420V480M1739.500 455V535M1747.500 480V535M1755.500 495V590M1763.500 480V555M1771.500 480V500M1779.500 490V555M1787.500 500V555M1795.500 485V560M1803.500 480V560M1811.500 483V565M1819.500 495V560M1827.500 497V695M1835.500 648V768M1843.500 712V768"/>
<path class="h" d="M969.500 350h4V380h-4zM977.500 357h4V365h-4zM1025.500 508h4V548h-4zM1057.500 640h4V727h-4zM1073.500 588h4V715h-4zM1105.500 885h4V1042h-4zM1129.500 1073h4V1175h-4zM1145.500 1076h4V1115h-4zM1169.500 1163h4V1177h-4zM1177.500 997h4V1163h-4zM1185.500 952h4V994h-4zM1201.500 997h4V1026h-4zM1209.500 961h4V997h-4zM1233.500 952h4V1006h-4zM1249.500 946h4V1000h-4zM1257.500 885h4V955h-4zM1265.500 790h4V892h-4zM1281.500 709h4V817h-4zM1305.500 868h4V883h-4zM1321.500 868h4V970h-4zM1337.500 823h4V856h-4zM1353.500 670h4V815h-4zM1361.500 553h4V671h-4zM1369.500 442h4V563h-4zM1377.500 283h4V445h-4zM1393.500 262h4V358h-4zM1401.500 211h4V261h-4zM1433.500 577h4V595h-4zM1449.500 550h4V613h-4zM1465.500 505h4V562h-4zM1473.500 451h4V505h-4zM1481.500 370h4V448h-4zM1513.500 502h4V592h-4zM1521.500 319h4V499h-4zM1529.500 316h4V325h-4zM1553.500 485h4V538h-4zM1569.500 493h4V638h-4zM1585.500 457h4V487h-4zM1593.500 376h4V458h-4zM1609.500 397h4V415h-4zM1633.500 430h4V481h-4zM1641.500 421h4V430h-4zM1657.500 430h4V448h-4zM1697.500 435h4V494h-4zM1729.500 467h4V475h-4zM1753.500 520h4V525h-4zM1761.500 484h4V527h-4zM1793.500 514h4V544h-4zM1809.500 502h4V541h-4z"/>
<path class="d" d="M985.500 367h4V406h-4zM993.500 397h4V425h-4zM1001.500 430h4V432h-4zM1009.500 436h4V478h-4zM1017.500 478h4V538h-4zM1033.500 508h4V584h-4zM1041.500 584h4V661h-4zM1049.500 656h4V721h-4zM1065.500 643h4V711h-4zM1081.500 592h4V727h-4zM1089.500 721h4V775h-4zM1097.500 779h4V1050h-4zM1113.500 889h4V1039h-4zM1121.500 1034h4V1170h-4zM1137.500 1076h4V1114h-4zM1153.500 1082h4V1141h-4zM1161.500 1141h4V1180h-4zM1193.500 952h4V1026h-4zM1217.500 959h4V975h-4zM1225.500 977h4V1009h-4zM1241.500 950h4V997h-4zM1273.500 790h4V823h-4zM1289.500 712h4V853h-4zM1297.500 857h4V880h-4zM1313.500 865h4V973h-4zM1329.500 853h4V868h-4zM1345.500 820h4V825h-4zM1385.500 283h4V364h-4zM1409.500 211h4V344h-4zM1417.500 346h4V508h-4zM1425.500 509h4V606h-4zM1441.500 577h4V613h-4zM1457.500 550h4V562h-4zM1489.500 373h4V417h-4zM1497.500 415h4V559h-4zM1505.500 550h4V588h-4zM1537.500 313h4V523h-4zM1545.500 521h4V538h-4zM1561.500 485h4V640h-4zM1577.500 490h4V492h-4zM1601.500 376h4V415h-4zM1617.500 395h4V478h-4zM1625.500 477h4V482h-4zM1649.500 421h4V448h-4zM1665.500 430h4V466h-4zM1673.500 465h4V469h-4zM1681.500 472h4V505h-4zM1689.500 496h4V499h-4zM1705.500 439h4V445h-4zM1713.500 445h4V475h-4zM1721.500 478h4V484h-4zM1737.500 469h4V508h-4zM1745.500 508h4V528h-4zM1769.500 484h4V498h-4zM1777.500 500h4V543h-4zM1785.500 537h4V542h-4zM1801.500 512h4V541h-4zM1817.500 508h4V532h-4zM1825.500 532h4V690h-4zM1833.500 686h4V723h-4zM1841.500 724h4V753h-4z"/>
</g></g></g>
<use href="#fw" x="958.500" y="446"/>
<path d="M1862 485.500h3m-3 33h3m-3 34h3m-3 34h3m-3 34h3m-3 33h3m-3 33h3m-3 34h3m-3 34h3m-3 34h3m-3 33h3m-3 34h3" stroke="#fff" fill="none"/>
<path d="M974 485h7l-3.500 3.500z" fill="#fff" shape-rendering="auto"/>
<text x="986" y="490.500">USDJPY,M15</text><text x="1048.500" y="490.500">105.131</text><text x="1084.500" y="490.500">105.138</text><text x="1121" y="490.500">105.103</text><text x="1157" y="490.500">105.112</text>
<text x="1866.500" y="489.500">105.510</text><text x="1866.500" y="522.500">105.445</text><text x="1866.500" y="556.500">105.380</text><text x="1866.500" y="590">105.315</text><text x="1866.500" y="624">105.250</text><text x="1866.500" y="657">105.185</text><text x="1866.500" y="690.500">105.120</text><text x="1866.500" y="724.500">105.055</text><text x="1866.500" y="758">104.990</text><text x="1866.500" y="792">104.925</text><text x="1866.500" y="825.500">104.860</text><text x="1866.500" y="859">104.795</text>
<rect x="1862" y="610" width="41" height="11" fill="#f03000"/><text class="k" x="1866.500" y="619.500">105.258</text>
<rect x="1862" y="686" width="41" height="11" fill="#fff"/><text class="k" x="1866.500" y="695.500">105.112</text>
<text x="970.500" y="871.500">9 Nov 2020</text><text x="1034.500" y="871.500">10 Nov 01:15</text><text x="1098.500" y="871.500">10 Nov 03:15</text><text x="1162.500" y="871.500">10 Nov 05:15</text><text x="1226.500" y="871.500">10 Nov 07:15</text><text x="1290.500" y="871.500">10 Nov 09:15</text><text x="1354.500" y="871.500">10 Nov 11:15</text><text x="1418.500" y="871.500">10 Nov 13:15</text><text x="1482.500" y="871.500">10 Nov 15:15</text><text x="1546.500" y="871.500">10 Nov 17:15</text><text x="1610.500" y="871.500">10 Nov 19:15</text><text x="1674.500" y="871.500">10 Nov 21:15</text><text x="1738.500" y="871.500">10 Nov 23:15</text><text x="1802.500" y="871.500">11 Nov 01:15</text>
</svg>
</body></html>
